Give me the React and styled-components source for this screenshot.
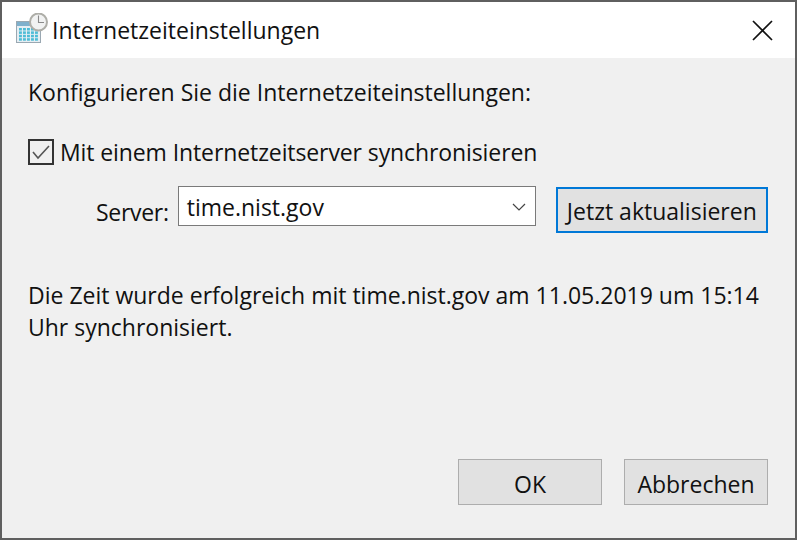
import React from "react";
import styled, { createGlobalStyle } from "styled-components";

const Global = createGlobalStyle`
  html, body { margin: 0; padding: 0; background: #5f5f5f; }
  * { box-sizing: border-box; }
`;
const Dialog = styled.div`
  width: 797px; height: 540px; display: flex; flex-direction: column;
  border: 2px solid #5f5f5f; background: #f0f0f0; overflow: hidden;
  font-family: "Open Sans", "Noto Sans", sans-serif; font-size: 23px; color: #111;
`;
const TitleBar = styled.div`
  height: 56px; flex: none; background: #fff; display: flex; align-items: center;
  padding: 0 22px 0 14px;
`;
const Title = styled.div` flex: 1; line-height: 56px; `;
const Body = styled.div`
  flex: 1; display: flex; flex-direction: column; padding: 0 27px 0 26px;
`;
const Heading = styled.div` margin-top: 19px; line-height: 30px; `;
const CheckRow = styled.label`
  display: flex; align-items: center; gap: 6px; margin-top: 29px; line-height: 30px;
  letter-spacing: -0.1px;
`;
const CheckText = styled.span` padding-top: 1px; `;
const Box = styled.span`
  width: 26px; height: 26px; border: 2px solid #333; display: flex;
  align-items: center; justify-content: center;
`;
const ServerRow = styled.div` display: flex; align-items: flex-start; margin-top: 19px; padding-left: 68px; `;
const Label = styled.span` width: 82px; line-height: 30px; margin-top: 11px; letter-spacing: -0.3px; `;
const Select = styled.div`
  width: 359px; height: 40px; background: #fff; border: 1px solid #7a7a7a; display: flex;
  align-items: center; justify-content: space-between; padding: 1px 9px 0 8px; line-height: 38px;
`;
const Button = styled.button`
  font: inherit; color: inherit; background: #e1e1e1;
  padding: ${(p) => (p.$focus ? "2px 0 0" : "3px 0 0")};
  border: ${(p) => (p.$focus ? "2px solid #0078d7" : "1px solid #adadad")};
  width: ${(p) => p.$w}px; height: ${(p) => p.$h}px;
  margin-left: ${(p) => p.$ml || 0}px; margin-top: ${(p) => p.$mt || 0}px;
`;
const Message = styled.div` margin-top: 46px; line-height: 32px; width: 736px; `;
const Footer = styled.div` margin-top: auto; margin-bottom: 33px; display: flex; justify-content: flex-end; gap: 22px; `;

const ClockCalendar = () => (
  <svg width="36" height="34" viewBox="0 0 36 34">
    <rect x="0.5" y="8.5" width="24" height="21" fill="#e6eef3" stroke="#9aa8b2" />
    <rect x="1" y="9" width="23" height="4" fill="#7fb0cc" />
    <g fill="#4dbcd6">
      {[0, 1, 2, 3].map((r) =>
        [0, 1, 2, 3, 4].map((c) => (
          <rect key={r + "-" + c} x={3 + c * 4} y={15 + r * 3.4} width="2.9" height="2.5" />
        ))
      )}
    </g>
    <circle cx="22.5" cy="9" r="8.5" fill="#f1f2f2" stroke="#aeaea8" strokeWidth="2" />
    <path d="M22.5 2.5v7h5.5" fill="none" stroke="#8a8a8a" strokeWidth="1.1" />
  </svg>
);

export default function App() {
  return (
    <>
      <Global />
      <Dialog>
        <TitleBar>
          <ClockCalendar />
          <Title>Internetzeiteinstellungen</Title>
          <svg width="21" height="21" viewBox="0 0 21 21">
            <path d="M1 1l19 19M20 1L1 20" stroke="#111" strokeWidth="1.7" />
          </svg>
        </TitleBar>
        <Body>
          <Heading>Konfigurieren Sie die Internetzeiteinstellungen:</Heading>
          <CheckRow>
            <Box>
              <svg width="20" height="16" viewBox="0 0 20 16">
                <path d="M2 8l5 6L18 2" fill="none" stroke="#555" strokeWidth="1.6" />
              </svg>
            </Box>
            <CheckText>Mit einem Internetzeitserver synchronisieren</CheckText>
          </CheckRow>
          <ServerRow>
            <Label>Server:</Label>
            <Select>
              time.nist.gov
              <svg width="14" height="8" viewBox="0 0 14 8">
                <path d="M1 1l6 6 6-6" fill="none" stroke="#444" strokeWidth="1.2" />
              </svg>
            </Select>
            <Button $focus $w={213} $h={46} $ml={20} $mt={1}>Jetzt aktualisieren</Button>
          </ServerRow>
          <Message>
            Die Zeit wurde erfolgreich mit time.nist.gov am 11.05.2019 um 15:14 Uhr synchronisiert.
          </Message>
          <Footer>
            <Button $w={144} $h={46}>OK</Button>
            <Button $w={144} $h={46}>Abbrechen</Button>
          </Footer>
        </Body>
      </Dialog>
    </>
  );
}
